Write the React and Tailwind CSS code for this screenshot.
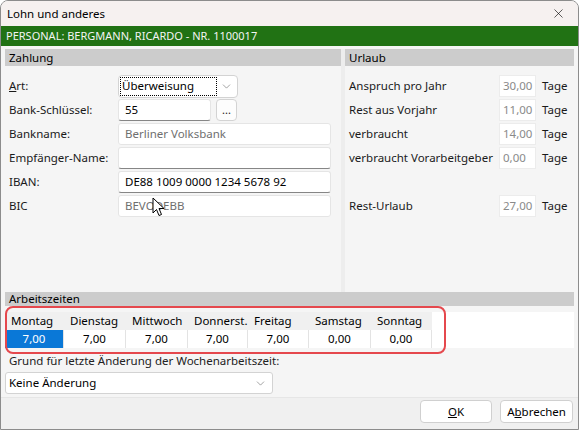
import { X, ChevronDown } from 'lucide-react';

const font = { fontFamily: '"Noto Sans", "Liberation Sans", sans-serif' };

function Field({ value, w = 'w-[213px]', dim = false, strong = false }) {
  return (
    <div
      className={`${w} h-[22px] bg-white rounded-[3px] border border-[#e5e5e5] flex items-center px-[6px] whitespace-nowrap ${strong ? 'border-b-[#868686]' : ''} ${dim ? 'text-[#6f6f6f]' : 'text-black'}`}
    >
      {value}
    </div>
  );
}

function Row({ label, children }) {
  return (
    <div className="flex items-center h-[24px]">
      <div className="w-[113px] pl-[4px] whitespace-nowrap">{label}</div>
      {children}
    </div>
  );
}

function UrlaubRow({ label, value }) {
  return (
    <div className="flex items-center h-[24px]">
      <div className="w-[154px] pl-[4px] whitespace-nowrap">{label}</div>
      <div className="w-[37px] h-[22px] bg-white border border-[#ececec] flex items-center pl-[3px] text-[#8a8a8a]">{value}</div>
      <div className="pl-[6px]">Tage</div>
    </div>
  );
}

const tage = [
  { name: 'Montag', val: '7,00', w: 'w-[59px]' },
  { name: 'Dienstag', val: '7,00', w: 'w-[62px]' },
  { name: 'Mittwoch', val: '7,00', w: 'w-[62px]' },
  { name: 'Donnerst.', val: '7,00', w: 'w-[60px]' },
  { name: 'Freitag', val: '7,00', w: 'w-[61px]' },
  { name: 'Samstag', val: '0,00', w: 'w-[62px]' },
  { name: 'Sonntag', val: '0,00', w: 'w-[61px]' },
];

export default function App() {
  return (
    <div style={font} className="relative w-[579px] h-[430px] bg-[#f5f5f5] border border-[#8c8c8c] rounded-t-[8px] overflow-hidden flex flex-col text-[11.5px] text-[#1a1a1a]">
      {/* Titelleiste */}
      <div className="h-[25px] bg-[#f6f1f0] flex items-center justify-between pl-[6px] pr-[12px] text-[11.5px] text-black">
        <span>Lohn und anderes</span>
        <X size={15} strokeWidth={1} />
      </div>
      <div className="h-[20px] bg-[#217214] text-[#f4f4f4] flex items-center pl-[5px] text-[11px]">
        PERSONAL: BERGMANN, RICARDO - NR. 1100017
      </div>

      <div className="px-[4px] pt-[3px] flex flex-col flex-1">
        <div className="flex h-[243px]">
          {/* Zahlung */}
          <div className="w-[336px] flex flex-col">
            <div className="h-[17px] bg-[#cccccc] pl-[4px] flex items-center text-black">Zahlung</div>
            <div className="pt-[8px] flex flex-col">
              <Row label={<span><span className="underline">A</span>rt:</span>}>
                <div className="w-[120px] h-[23px] bg-white border border-[#d3d3d3] rounded-[4px] flex items-center pl-[1px] pr-[4px] justify-between">
                  <span className="border border-dotted border-black px-[1px] h-[19px] w-[97px] flex items-center text-black">Überweisung</span>
                  <ChevronDown size={13} strokeWidth={1} className="text-[#555]" />
                </div>
              </Row>
              <Row label="Bank-Schlüssel:">
                <Field value="55" w="w-[93px]" strong />
                <div className="ml-[5px] w-[21px] h-[22px] bg-[#fdfdfd] border border-[#d3d3d3] rounded-[4px] flex items-center justify-center text-[11px] leading-none pb-[2px]">...</div>
              </Row>
              <Row label="Bankname:">
                <Field value="Berliner Volksbank" dim />
              </Row>
              <Row label="Empfänger-Name:">
                <Field value="" strong />
              </Row>
              <Row label="IBAN:">
                <Field value="DE88 1009 0000 1234 5678 92" strong />
              </Row>
              <Row label="BIC">
                <Field value="BEVODEBB" dim />
              </Row>
            </div>
          </div>
          <div className="w-[4px] bg-[#ededed]" />
          {/* Urlaub */}
          <div className="flex-1 flex flex-col">
            <div className="h-[17px] bg-[#cccccc] pl-[4px] flex items-center text-black">Urlaub</div>
            <div className="pt-[8px] flex flex-col">
              <UrlaubRow label="Anspruch pro Jahr" value="30,00" />
              <UrlaubRow label="Rest aus Vorjahr" value="11,00" />
              <UrlaubRow label="verbraucht" value="14,00" />
              <UrlaubRow label="verbraucht Vorarbeitgeber" value="0,00" />
              <div className="h-[24px]" />
              <UrlaubRow label="Rest-Urlaub" value="27,00" />
            </div>
          </div>
        </div>

        {/* Arbeitszeiten */}
        <div className="h-[14px] bg-[#cccccc] pl-[4px] flex items-center text-black">Arbeitszeiten</div>
        <div className="mt-[6px] h-[36px] bg-white flex">
          <div className="flex">
            {tage.map((t, i) => (
              <div key={t.name} className={`${t.w} flex flex-col`}>
                <div className="h-[18px] bg-[#f0f0f0] flex items-center pl-[6px] text-black whitespace-nowrap">{t.name}</div>
                <div
                  className={`h-[18px] flex items-center justify-center border-r border-[#e3e3e3] ${i === 0 ? 'bg-[#0a78d7] text-white' : 'text-black'}`}
                >
                  {t.val}
                </div>
              </div>
            ))}
          </div>
        </div>
        <div className="mt-[4px] pl-[4px] h-[18px] flex items-center text-[#222]">Grund für letzte Änderung der Wochenarbeitszeit:</div>
        <div className="mt-[2px] w-[268px] h-[22px] bg-white border border-[#d3d3d3] rounded-[3px] flex items-center justify-between pl-[3px] pr-[5px] text-black">
          <span>Keine Änderung</span>
          <ChevronDown size={13} strokeWidth={1} className="text-[#555]" />
        </div>
      </div>

      {/* Fußleiste */}
      <div className="h-[32px] bg-[#f0f0f0] border-t border-[#e6e6e6] flex items-center justify-end gap-[8px] pr-[5px] pb-[4px]">
        <button className="w-[72px] h-[23px] bg-white border border-[#d0d0d0] rounded-[4px] text-black">
          <span className="underline">O</span>K
        </button>
        <button className="w-[73px] h-[23px] bg-white border border-[#d0d0d0] rounded-[4px] text-black">
          A<span className="underline">b</span>brechen
        </button>
      </div>

      {/* Markierung */}
      <div className="absolute left-[4px] top-[305px] w-[441px] h-[48px] border-2 border-[#e5484d] rounded-[8px]" />

      {/* Mauszeiger */}
      <svg className="absolute left-[151px] top-[196px]" width="13" height="20" viewBox="0 0 13 20">
        <path d="M1 1 L1 16 L4.5 12.5 L7 18.5 L9.5 17.5 L7 11.5 L12 11.5 Z" fill="white" stroke="black" strokeWidth="1" strokeLinejoin="round" />
      </svg>
    </div>
  );
}
